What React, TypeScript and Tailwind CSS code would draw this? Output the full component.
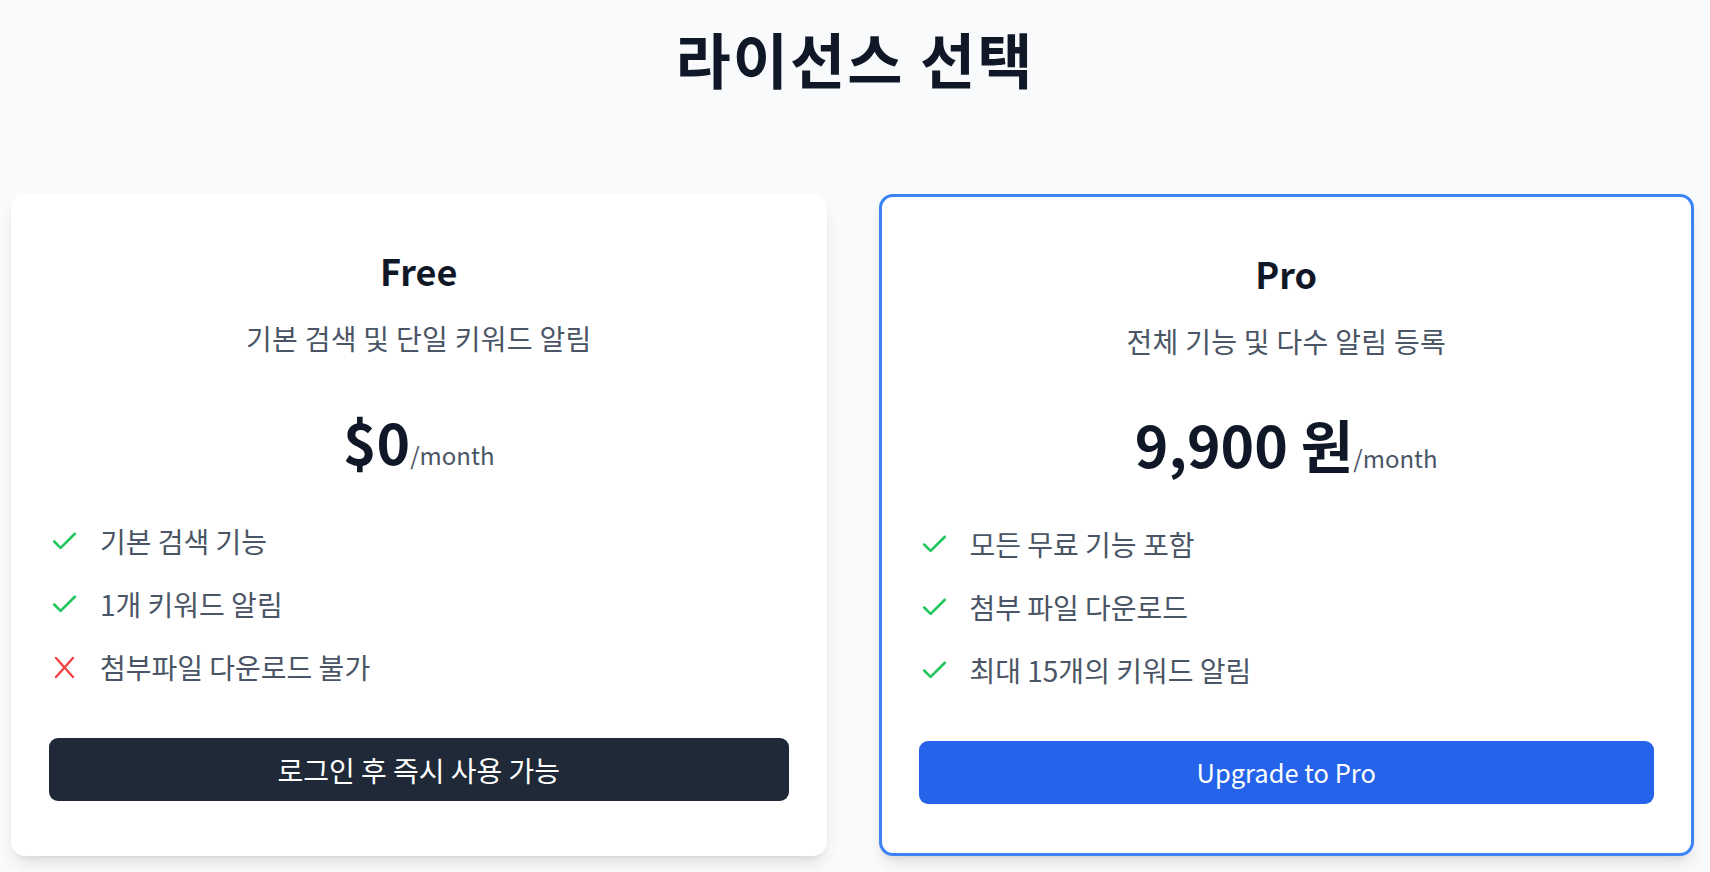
import React from "react";

function CheckIcon() {
  return (
    <svg width="31" height="31" viewBox="0 0 24 24" fill="none" stroke="#22c55e" strokeWidth="2" strokeLinecap="round" strokeLinejoin="round" className="shrink-0">
      <path d="M20 6 9 17l-5-5" />
    </svg>
  );
}

function XIcon() {
  return (
    <svg width="31" height="31" viewBox="0 0 31 31" fill="none" stroke="#ef4444" strokeWidth="2.4" strokeLinecap="round" className="shrink-0">
      <path d="M7 6l17 19M24 6 7 25" />
    </svg>
  );
}

type Feature = { text: string; ok: boolean };

function Card({
  name,
  desc,
  price,
  features,
  button,
  pro,
}: {
  name: string;
  desc: string;
  price: string;
  features: Feature[];
  button: string;
  pro?: boolean;
}) {
  return (
    <div
      className={
        pro
          ? "flex flex-col rounded-[14px] bg-white shadow-lg border-[3px] border-[#3b82f6] px-[37px] pt-[54px] pb-[48px]"
          : "flex flex-col rounded-[14px] bg-white shadow-lg px-[38px] pt-[54px] pb-[55px]"
      }
    >
      <h2 className="text-center text-[36px] leading-[45px] font-bold text-gray-900">{name}</h2>
      <p className="mt-[27px] text-center text-[28px] leading-[36px] tracking-[0.3px] text-gray-600">{desc}</p>
      <div className="mt-[54px] flex items-baseline justify-center">
        <span className="text-[57px] leading-[60px] font-bold text-gray-900">{price}</span>
        <span className="text-[24px] leading-[30px] text-gray-600">/month</span>
      </div>
      <ul className="mt-[54px] flex flex-col gap-[29px]">
        {features.map((f) => (
          <li key={f.text} className="flex items-center gap-[20px] h-[34px]">
            {f.ok ? <CheckIcon /> : <XIcon />}
            <span className="text-[28px] leading-[34px] text-gray-600">{f.text}</span>
          </li>
        ))}
      </ul>
      <button
        className={
          pro
            ? "mt-[54px] h-[63px] w-full rounded-[9px] bg-[#2563eb] text-white text-[25.5px]"
            : "mt-[54px] h-[63px] w-full rounded-[9px] bg-[#1f2937] text-white text-[28px]"
        }
      >
        {button}
      </button>
    </div>
  );
}

export default function App() {
  return (
    <div className="min-h-screen bg-gray-50 font-['Noto_Sans_CJK_KR','Noto_Sans',sans-serif]">
      <h1 className="pt-[22px] text-center text-[60px] leading-[72px] tracking-[2px] font-bold text-gray-900">라이선스 선택</h1>
      <div className="mt-[100px] grid grid-cols-2 gap-[52px] pl-[11px] pr-[16px]">
        <Card
          name="Free"
          desc="기본 검색 및 단일 키워드 알림"
          price="$0"
          features={[
            { text: "기본 검색 기능", ok: true },
            { text: "1개 키워드 알림", ok: true },
            { text: "첨부파일 다운로드 불가", ok: false },
          ]}
          button="로그인 후 즉시 사용 가능"
        />
        <Card
          name="Pro"
          desc="전체 기능 및 다수 알림 등록"
          price="9,900 원"
          features={[
            { text: "모든 무료 기능 포함", ok: true },
            { text: "첨부 파일 다운로드", ok: true },
            { text: "최대 15개의 키워드 알림", ok: true },
          ]}
          button="Upgrade to Pro"
          pro
        />
      </div>
    </div>
  );
}
